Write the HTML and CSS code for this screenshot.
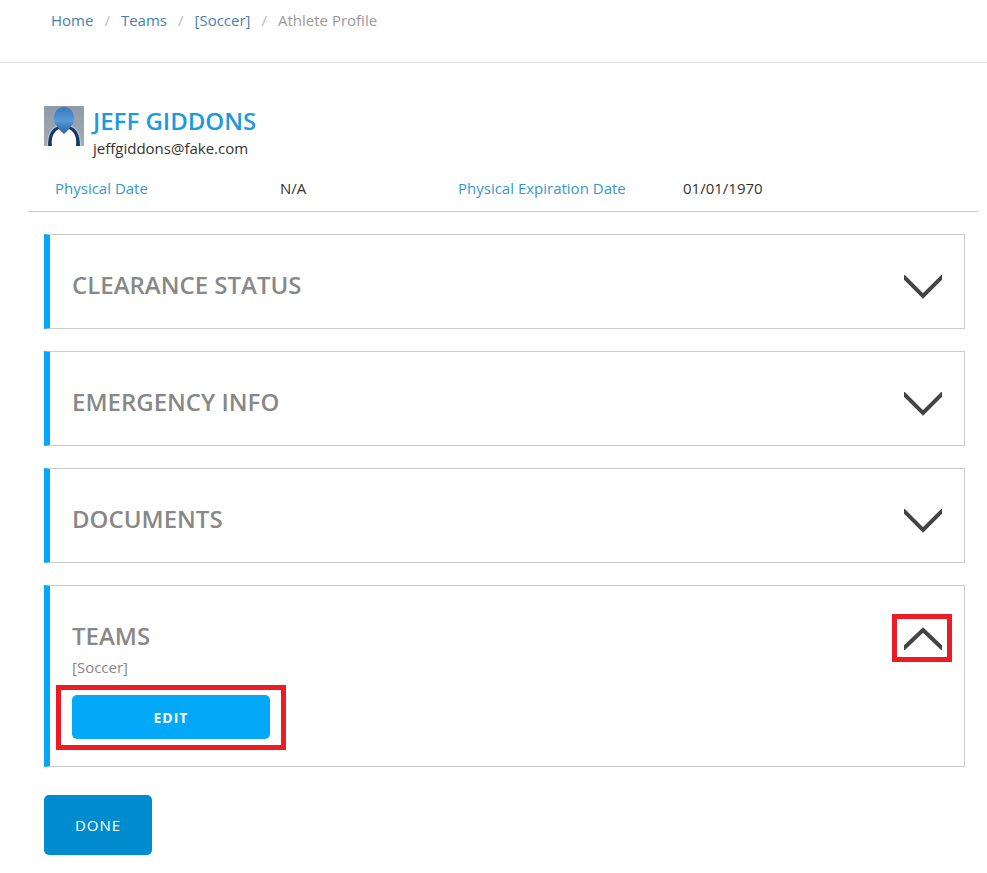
FILE: index.html
```html
<!DOCTYPE html>
<html lang="en">
<head>
<meta charset="utf-8">
<title>Athlete Profile</title>
<link rel="stylesheet" href="styles.css">
</head>
<body>
<nav class="breadcrumb" aria-label="Breadcrumb">
  <ol>
    <li><a href="#">Home</a></li>
    <li><a href="#">Teams</a></li>
    <li><a href="#">[Soccer]</a></li>
    <li aria-current="page">Athlete Profile</li>
  </ol>
</nav>
<main>
  <header class="profile">
    <svg class="avatar" viewBox="0 0 40 40" aria-hidden="true">
      <defs>
        <linearGradient id="bg" x2="0" y2="1"><stop stop-color="#8d9baa"/><stop offset="1" stop-color="#a3abb5"/></linearGradient>
        <linearGradient id="head" x2="0" y2="1"><stop stop-color="#3676b8"/><stop offset=".5" stop-color="#5599d8"/><stop offset="1" stop-color="#2762a6"/></linearGradient>
      </defs>
      <path fill="url(#bg)" d="M0 0h40v40H0z"/>
      <path fill="#c3ccd6" d="M3 40C3 28 7 21 15 19h10c8 2 12 9 12 21z"/>
      <path fill="#12396f" d="M4 40C4 28 8 22 15 20h10c7 2 11 8 11 20z"/>
      <path fill="#fff" d="M8 40c-1-8 1-14 7-17l5 4 5-4c6 3 8 9 7 17z"/>
      <path fill="url(#head)" d="M20 1c6 0 10 5 10 11 0 5-3 9-6 12l-4 4-4-4c-3-3-6-7-6-12C10 6 14 1 20 1z"/>
    </svg>
    <div>
      <h1>JEFF GIDDONS</h1>
      <p class="email">jeffgiddons@fake.com</p>
    </div>
  </header>
  <dl class="dates">
    <dt>Physical Date</dt><dd>N/A</dd>
    <dt>Physical Expiration Date</dt><dd>01/01/1970</dd>
  </dl>
  <div class="panels">
    <section class="panel">
      <h2>CLEARANCE STATUS</h2>
      <button class="toggle" type="button" aria-label="Expand clearance status"><svg viewBox="0 0 38 24"><path d="M-2 0l21 21L40 0"/></svg></button>
    </section>
    <section class="panel">
      <h2>EMERGENCY INFO</h2>
      <button class="toggle" type="button" aria-label="Expand emergency info"><svg viewBox="0 0 38 24"><path d="M-2 0l21 21L40 0"/></svg></button>
    </section>
    <section class="panel">
      <h2>DOCUMENTS</h2>
      <button class="toggle" type="button" aria-label="Expand documents"><svg viewBox="0 0 38 24"><path d="M-2 0l21 21L40 0"/></svg></button>
    </section>
    <section class="panel">
      <div>
        <h2>TEAMS</h2>
        <p class="team">[Soccer]</p>
        <div class="marked edit-mark"><button class="edit" type="button">EDIT</button></div>
      </div>
      <button class="toggle marked" type="button" aria-label="Collapse teams"><svg viewBox="0 0 38 24"><path d="M-2 24L19 4l21 20"/></svg></button>
    </section>
  </div>
  <button class="done" type="button">DONE</button>
</main>
</body>
</html>
```

FILE: styles.css
```css
* { box-sizing: border-box; }
body { margin: 0; background: #fff; color: #333; font: 15px/20px "Open Sans", sans-serif; }
h1, h2, p, dl, dd, ol { margin: 0; padding: 0; }
a { color: #4682b0; text-decoration: none; }
button { font-family: inherit; cursor: pointer; }
.breadcrumb { padding: 10px 51px 32px; border-bottom: 1px solid #ddd; }
.breadcrumb ol { display: flex; list-style: none; color: #999; }
.breadcrumb li + li::before { content: "/"; padding: 0 11px; color: #bbb; }
main { padding: 43px 22px 18px 44px; }
.profile { display: flex; gap: 9px; }
.avatar { width: 40px; height: 40px; }
h1 { color: #1b9ae0; font-size: 24px; line-height: 30px; font-weight: 600; }
.email { line-height: 24px; }
.dates { display: grid; grid-template-columns: 225px 178px 225px 1fr; margin: 12px -13px 0 -16px; padding: 6px 0 13px 27px; border-bottom: 1px solid #ccc; }
.dates dt { color: #3399d0; }
.panels { display: grid; gap: 22px; margin-top: 22px; }
.panel { display: flex; justify-content: space-between; align-items: flex-start; min-height: 95px; padding: 28px 12px 16px 22px; border: 1px solid #ccc; border-left: 6px solid #06a7f6; }
h2 { color: #888; font-size: 24px; line-height: 44px; font-weight: 600; }
.toggle { display: flex; align-items: center; justify-content: flex-end; width: 60px; height: 48px; padding: 0 5px 0 0; border: 5px solid transparent; background: none; }
.toggle svg { width: 38px; height: 24px; fill: none; stroke: #444; stroke-width: 4; }
.marked { border: 5px solid #ed1c24; }
.team { color: #888; line-height: 18px; }
.edit-mark { width: 230px; margin: 9px 0 0 -16px; padding: 5px 11px 6px; }
.edit { display: block; width: 100%; height: 44px; border: 0; border-radius: 5px; background: #03a9f8; color: #fff; font-size: 14px; font-weight: 700; letter-spacing: 1px; }
.done { display: block; width: 108px; height: 60px; margin-top: 28px; border: 0; border-radius: 5px; background: #008ccf; color: #fff; font-size: 15px; letter-spacing: 1px; }
```
